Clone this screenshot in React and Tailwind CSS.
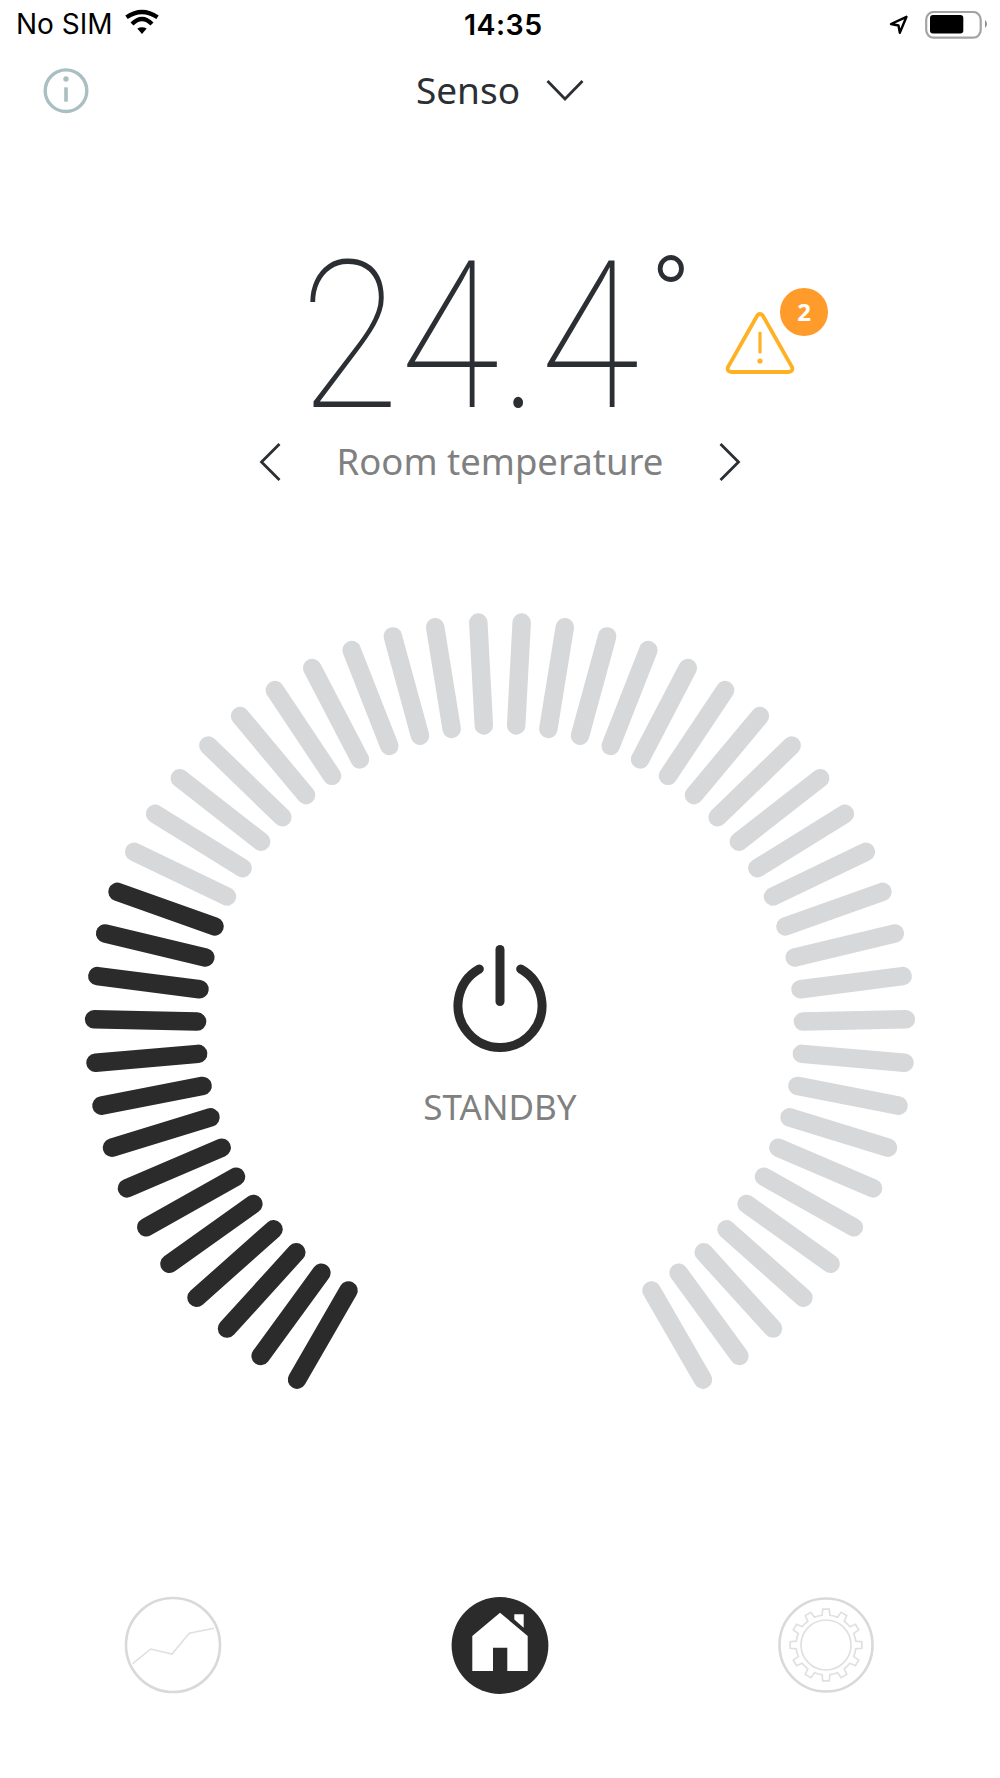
import React from "react";

const CX = 500, CY = 434;
const ticks = Array.from({ length: 50 }, (_, i) => {
  const deg = 30 + i * (300 / 49);
  const a = (deg * Math.PI) / 180;
  const s = Math.sin(a), c = Math.cos(a);
  return {
    x1: CX - 406 * s, y1: CY + 406 * c,
    x2: CX - 303 * s, y2: CY + 303 * c,
    dark: i < 14,
  };
});

function gearPath(cx, cy) {
  const n = 12, rO = 36, rI = 30;
  let d = "";
  for (let i = 0; i < n; i++) {
    const base = (i * 2 * Math.PI) / n - Math.PI / 2;
    const p = [[rI, -0.262], [rI, -0.13], [rO, -0.09], [rO, 0.09], [rI, 0.13]];
    p.forEach(([r, o], j) => {
      const x = cx + r * Math.cos(base + o), y = cy + r * Math.sin(base + o);
      d += `${i === 0 && j === 0 ? "M" : "L"}${x.toFixed(2)} ${y.toFixed(2)} `;
    });
  }
  return d + "Z";
}

export default function App() {
  return (
    <div className="w-[1000px] h-[1778px] bg-white overflow-hidden flex flex-col text-[#2b2e33] font-['Noto_Sans',sans-serif]">
      {/* status bar */}
      <div className="h-[50px] relative flex items-center justify-between pl-4 pr-[11px] text-black text-[28px] font-['Inter',sans-serif]">
        <div className="flex items-center gap-[11px] -mt-[2px]">
          <span className="leading-none">No SIM</span>
          <svg width="36" height="28" viewBox="0 0 36 28" className="-mt-1">
            <path d="M2.5 9.3 Q18 -1.3 33.5 9.3" fill="none" stroke="#000" strokeWidth="4.2" />
            <path d="M8 16 Q18 6 28 16" fill="none" stroke="#000" strokeWidth="4.2" />
            <path d="M13.3 20.5 Q18 18 22.7 20.5 L18 26 Z" fill="#000" />
          </svg>
        </div>
        <span className="absolute left-[464px] top-[9px] font-semibold text-[28.5px] tracking-[0.5px] leading-[32px]">14:35</span>
        <div className="flex items-center gap-[14px]">
          <svg width="24" height="24" viewBox="0 0 24 24">
            <path d="M19.5 3.8 L4 11 L11.5 12.5 L12.8 19.8 Z" fill="none" stroke="#000" strokeWidth="2.4" strokeLinejoin="round" />
          </svg>
          <svg width="64" height="28" viewBox="0 0 64 28">
            <rect x="1.2" y="1" width="54.5" height="25.6" rx="7.5" fill="none" stroke="#a3a3a3" strokeWidth="2.2" />
            <rect x="5" y="4" width="33.3" height="18.5" rx="3" fill="#000" />
            <path d="M60 9 A5 5 0 0 1 60 17 Z" fill="#8e8e8e" />
          </svg>
        </div>
      </div>

      {/* header */}
      <div className="h-[84px] relative flex items-center justify-center">
        <svg width="48" height="48" viewBox="0 0 48 48" className="absolute left-[42px] top-[17px]">
          <circle cx="24" cy="23.7" r="20.8" fill="none" stroke="#a9bfc1" strokeWidth="3.4" />
          <circle cx="24" cy="12" r="2.7" fill="#a9bfc1" />
          <path d="M24 20.3 V34.7" stroke="#a9bfc1" strokeWidth="3.6" />
        </svg>
        <div className="flex items-center gap-[26px] -mt-[6px]">
          <span className="text-[37px] leading-none">Senso</span>
          <svg width="38" height="22" viewBox="0 0 38 22" className="mt-[2px]">
            <path d="M1.5 2 L19 20 L36.5 2" fill="none" stroke="#2b2e33" strokeWidth="2.8" />
          </svg>
        </div>
      </div>

      {/* temperature */}
      <div className="h-[290px] relative font-['Roboto',sans-serif]">
        <span className="block ml-[300px] mt-[116px] whitespace-nowrap text-[206px] leading-[174px] font-thin tracking-[1px] origin-left scale-x-[0.88]">24.4</span>
        <span className="absolute left-[650px] top-[108px] text-[110px] font-light leading-none">°</span>
        <svg width="70" height="64" viewBox="0 0 70 64" className="absolute left-[725px] top-[177px]">
          <path d="M35 3 Q37 3 38 5 L67 56 Q68.5 60 64 61 L6 61 Q1.5 60 3 56 L32 5 Q33 3 35 3 Z" fill="none" stroke="#ffb125" strokeWidth="3.8" />
          <path d="M35 22 V41" stroke="#ffb125" strokeWidth="3.2" strokeLinecap="round" />
          <circle cx="35" cy="50" r="2.6" fill="#ffb125" />
        </svg>
        <div className="absolute left-[780px] top-[154px] w-[48px] h-[48px] rounded-full bg-[#ff9b2b] flex items-center justify-center text-white text-[24px] font-bold leading-none font-['Noto_Sans',sans-serif]">2</div>
      </div>

      {/* label row */}
      <div className="mt-[18px] mx-[259px] h-[40px] flex items-center justify-between">
        <svg width="22" height="40" viewBox="0 0 22 40"><path d="M20.5 2 L2.5 20 L20.5 38" fill="none" stroke="#2b2e33" strokeWidth="2.8" /></svg>
        <span className="text-[36.5px] text-[#808080] leading-none -mt-[2px]">Room temperature</span>
        <svg width="22" height="40" viewBox="0 0 22 40"><path d="M1.5 2 L19.5 20 L1.5 38" fill="none" stroke="#2b2e33" strokeWidth="2.8" /></svg>
      </div>

      {/* gauge */}
      <div className="relative mt-[112px] h-[800px]">
        <svg width="1000" height="800" viewBox="0 0 1000 800" className="block">
          {ticks.map((t, i) => (
            <line key={i} x1={t.x1} y1={t.y1} x2={t.x2} y2={t.y2} stroke={t.dark ? "#2b2b2b" : "#d7d8da"} strokeWidth="18.5" strokeLinecap="round" />
          ))}
        </svg>
        <div className="absolute left-0 right-0 top-[351px] flex flex-col items-center">
          <svg width="100" height="122" viewBox="0 0 100 122">
            <path d="M29.3 24 A42 42 0 1 0 70.7 24" fill="none" stroke="#2b2b2b" strokeWidth="9" strokeLinecap="round" />
            <path d="M50 4.5 V56.5" stroke="#2b2b2b" strokeWidth="9" strokeLinecap="round" />
          </svg>
          <span className="mt-[22px] text-[35px] leading-none text-[#808080]">STANDBY</span>
        </div>
      </div>

      {/* bottom nav */}
      <div className="mt-[201px] relative h-[100px] flex items-center justify-between pl-[124px] pr-[124px]">
        <svg width="100" height="100" viewBox="0 0 100 100">
          <circle cx="49" cy="50" r="47" fill="none" stroke="#d8d9da" strokeWidth="2.6" />
          <path d="M8.7 68.7 L26.7 54 L48 59 L65.3 38.3 L90 33.3" fill="none" stroke="#dfe0e1" strokeWidth="1.6" />
        </svg>
        <svg width="100" height="100" viewBox="0 0 100 100">
          <circle cx="50" cy="50.5" r="48.4" fill="#2b2b2b" />
          <path d="M50 17.7 L22.3 41 V76 H43 V52.7 H57.3 V76 H77.7 V41 Z" fill="#fff" />
          <path d="M64.3 19.3 H73.7 V32.7 L64.3 24.5 Z" fill="#fff" />
        </svg>
        <svg width="100" height="100" viewBox="0 0 100 100">
          <circle cx="50" cy="50" r="46.5" fill="none" stroke="#d8d9da" strokeWidth="2.6" />
          <circle cx="50" cy="50" r="25" fill="none" stroke="#dfe0e1" strokeWidth="1.7" />
          <path d={gearPath(50, 50)} fill="none" stroke="#dfe0e1" strokeWidth="1.7" />
        </svg>
      </div>
    </div>
  );
}
